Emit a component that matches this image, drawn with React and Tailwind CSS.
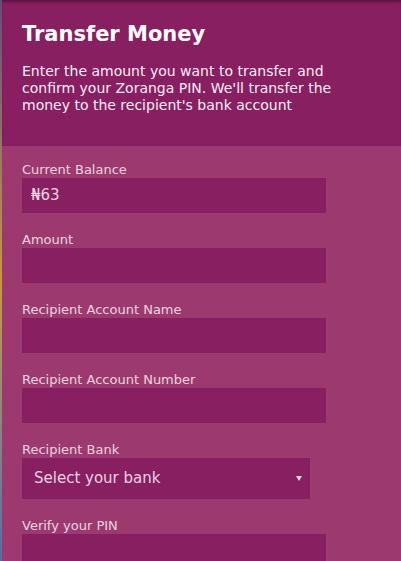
const fields = [
  { label: 'Current Balance', value: '₦63' },
  { label: 'Amount' },
  { label: 'Recipient Account Name' },
  { label: 'Recipient Account Number' },
];

function Field({ label, value }) {
  return (
    <div className="flex flex-col">
      <label className="text-[13px] leading-[16px] text-[#ecd3e2]">{label}</label>
      <div className="flex h-[35px] w-[304px] items-center bg-[#881f61] px-[9px] text-[15px] text-[#ecd3e2]">
        {value}
      </div>
    </div>
  );
}

export default function App() {
  return (
    <div
      className="flex h-[561px] w-[401px] overflow-hidden"
      style={{ fontFamily: '"DejaVu Sans", Verdana, sans-serif' }}
    >
      {/* background photo peeking out on the left */}
      <div className="w-[2px] shrink-0 bg-gradient-to-b from-[#6a4a78] via-[#c89a3a] to-[#5a6aa8]" />

      <div className="flex flex-1 flex-col bg-[#9c3a6f]">
        {/* Header */}
        <div className="h-[146px] shrink-0 bg-[#881f61] px-[20px] pt-[21px] shadow-[inset_0_3px_3px_-1px_rgba(0,0,0,0.35)]">
          <h1 className="text-[21px] font-bold leading-[26px] text-white">Transfer Money</h1>
          <p className="mt-[16px] text-[14px] leading-[17px] text-[#fbeef6]">
            Enter the amount you want to transfer and confirm your Zoranga PIN. We'll transfer the
            money to the recipient's bank account
          </p>
        </div>

        {/* Form */}
        <div className="flex flex-col gap-[19px] px-[20px] pt-[16px]">
          {fields.map((f) => (
            <Field key={f.label} {...f} />
          ))}

          <div className="flex flex-col">
            <label className="text-[13px] leading-[16px] text-[#ecd3e2]">Recipient Bank</label>
            <div className="relative flex h-[41px] w-[288px] shrink-0 items-center bg-[#881f61] px-[12px] text-[15px] text-[#ecd3e2]">
              Select your bank
              <svg className="absolute right-[8px] top-[18px]" width="6" height="5" viewBox="0 0 6 5">
                <path d="M0 0H6L3 5Z" fill="#dcdcdc" />
              </svg>
            </div>
          </div>

          <div className="flex flex-col">
            <label className="text-[13px] leading-[16px] text-[#ecd3e2]">Verify your PIN</label>
            <div className="h-[35px] w-[304px] shrink-0 bg-[#881f61]" />
          </div>
        </div>
      </div>
    </div>
  );
}
